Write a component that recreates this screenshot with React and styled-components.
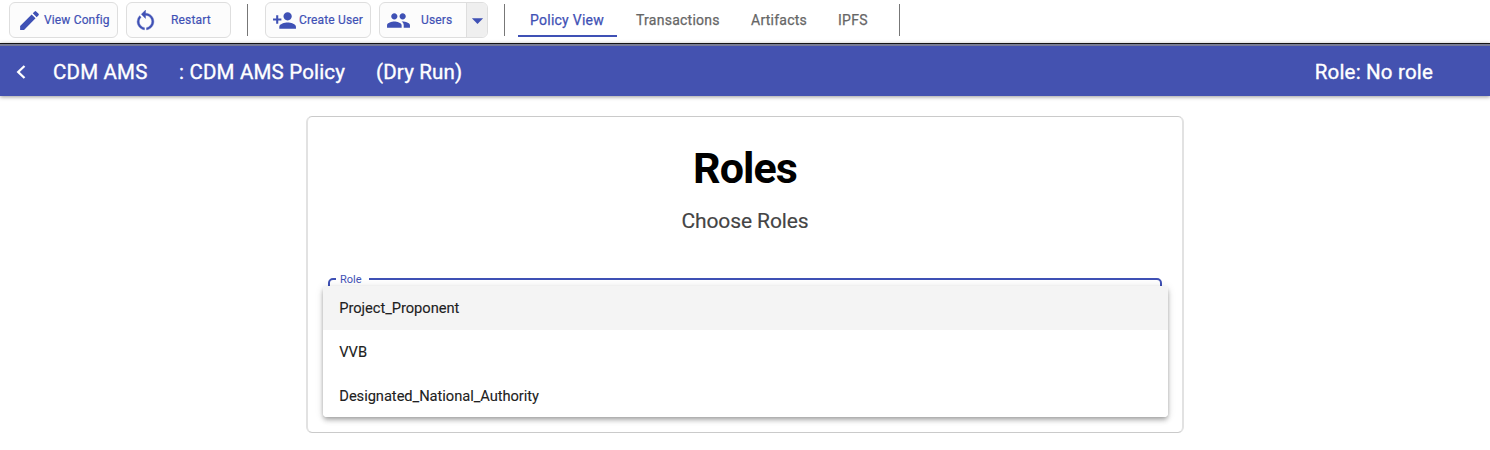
import React from "react";
import styled, { createGlobalStyle } from "styled-components";
import { MdEdit, MdRestartAlt, MdPersonAdd, MdGroup, MdArrowDropDown } from "react-icons/md";

const GlobalStyle = createGlobalStyle`
  *, *::before, *::after { box-sizing: border-box; }
  body { margin: 0; background: #fff; font-family: Roboto, "Liberation Sans", sans-serif; overflow: hidden; }
`;

const Page = styled.div`
  height: 450px;
  display: flex;
  flex-direction: column;
`;

const Toolbar = styled.div`
  height: 43px;
  flex: none;
  display: flex;
  align-items: flex-start;
  padding: 2px 0 0 9px;
`;

const ToolButton = styled.button`
  display: flex;
  align-items: center;
  height: 36px;
  width: ${(p) => p.$width}px;
  margin-right: ${(p) => p.$after}px;
  padding: 0 0 0 ${(p) => p.$pad}px;
  border: 1px solid #dedede;
  border-radius: 6px;
  background: #fcfcfc;
  color: #3f51b5;
  font: 400 12px Roboto, sans-serif;
  white-space: nowrap;
  overflow: hidden;
  svg { flex: none; }
`;

const ButtonLabel = styled.span`
  margin-left: ${(p) => p.$gap}px;
  letter-spacing: 0.15px;
  -webkit-text-stroke: 0.2px currentColor;
`;

const RestartIcon = styled(MdRestartAlt)`
  path:not([fill="none"]) {
    stroke: currentColor;
    stroke-width: 0.4px;
  }
`;

const DropPart = styled.span`
  display: flex;
  align-items: center;
  justify-content: center;
  align-self: stretch;
  width: 21px;
  margin-left: auto;
  border-left: 1px solid #dedede;
  background: #efefef;
`;

const Divider = styled.div`
  width: 1px;
  height: 32px;
  margin: 2px ${(p) => p.$after}px 0 0;
  background: #777;
`;

const Tabs = styled.nav`
  display: flex;
  margin-right: 18px;
`;

const Tab = styled.a`
  height: 35px;
  padding-left: ${(p) => (p.$active ? 12 : 19)}px;
  line-height: 37px;
  font-size: 14px;
  letter-spacing: 0.25px;
  -webkit-text-stroke: 0.25px currentColor;
  width: ${(p) => p.$width}px;
  white-space: nowrap;
  color: ${(p) => (p.$active ? "#3f51b5" : "#666")};
  border-bottom: 2px solid ${(p) => (p.$active ? "#3f51b5" : "transparent")};
`;

const Header = styled.header`
  height: 53px;
  flex: none;
  display: flex;
  align-items: center;
  padding: 4px 57px 0 15px;
  border-top: 1px solid #151515;
  background: linear-gradient(#777b96 0 2px, #4452b0 2px);
  color: #fff;
  font-size: 20.5px;
  letter-spacing: 0.18px;
  -webkit-text-stroke: 0.35px currentColor;
  box-shadow: 0 1px 4px rgba(0, 0, 0, 0.4);
  white-space: nowrap;
`;

const BackIcon = styled.svg`
  width: 11px;
  height: 16px;
  margin-right: 27px;
`;

const HeaderText = styled.span`
  width: ${(p) => p.$width}px;
  flex: none;
`;

const HeaderRole = styled.span`
  margin-left: auto;
`;

const Card = styled.main`
  width: 878px;
  height: 317px;
  margin: 20px 0 0 306px;
  padding: 26px 15px 0;
  border: solid;
  border-width: 1px 2px;
  border-color: #cacaca #e2e2e2;
  border-radius: 6px;
`;

const Title = styled.h1`
  margin: 0;
  height: 51px;
  line-height: 51px;
  text-align: center;
  font-size: 43px;
  font-weight: 700;
  letter-spacing: -0.9px;
  color: #000;
`;

const Subtitle = styled.p`
  margin: 12px 0 0;
  line-height: 31px;
  height: 30px;
  text-align: center;
  font-size: 21px;
  letter-spacing: -0.1px;
  color: #444;
  -webkit-text-stroke: 0.15px currentColor;
`;

const SelectWrap = styled.div`
  position: relative;
  width: 845px;
  margin-top: 36px;
`;

const Field = styled.fieldset`
  height: 50px;
  margin: 0 6px 0 5px;
  padding: 0 0 0 1px;
  border: 2px solid #3f51b5;
  border-radius: 5px;
`;

const FieldLabel = styled.legend`
  height: 14px;
  margin-left: 5px;
  padding: 0 7px 0 4px;
  line-height: 15px;
  font-size: 11px;
  color: #3f51b5;
`;

const Options = styled.ul`
  position: absolute;
  top: 14px;
  left: 0;
  right: 0;
  margin: 0;
  padding: 0;
  list-style: none;
  overflow: hidden;
  border-radius: 4px;
  background: #fff;
  box-shadow: 0 2px 4px -1px rgba(0, 0, 0, 0.25), 0 4px 5px rgba(0, 0, 0, 0.14), 0 1px 9px rgba(0, 0, 0, 0.12);
`;

const Option = styled.li`
  height: 43.8px;
  line-height: 44px;
  padding-left: 16.3px;
  font-size: 14.7px;
  letter-spacing: -0.05px;
  color: #212121;
  -webkit-text-stroke: 0.1px currentColor;
  background: ${(p) => (p.$active ? "#f4f4f4" : "#fff")};
`;

export default function App() {
  return (
    <Page>
      <GlobalStyle />
      <Toolbar>
        <ToolButton $width={109} $after={8} $pad={7}>
          <MdEdit size={25} />
          <ButtonLabel $gap={2}>View Config</ButtonLabel>
        </ToolButton>
        <ToolButton $width={105} $after={16} $pad={6}>
          <RestartIcon size={25} />
          <ButtonLabel $gap={13}>Restart</ButtonLabel>
        </ToolButton>
        <Divider $after={17} />
        <ToolButton $width={106} $after={8} $pad={6}>
          <MdPersonAdd size={25} />
          <ButtonLabel $gap={2}>Create User</ButtonLabel>
        </ToolButton>
        <ToolButton $width={109} $after={16} $pad={6}>
          <MdGroup size={25} />
          <ButtonLabel $gap={10}>Users</ButtonLabel>
          <DropPart><MdArrowDropDown size={27} /></DropPart>
        </ToolButton>
        <Divider $after={13} />
        <Tabs>
          <Tab $active $width={99}>Policy View</Tab>
          <Tab $width={115}>Transactions</Tab>
          <Tab $width={87}>Artifacts</Tab>
          <Tab $width={62}>IPFS</Tab>
        </Tabs>
        <Divider $after={0} />
      </Toolbar>
      <Header>
        <BackIcon viewBox="0 0 11 16">
          <path d="M9.5 2 3.2 8l6.3 6" fill="none" stroke="#fff" strokeWidth="2.3" />
        </BackIcon>
        <HeaderText $width={126}>CDM AMS</HeaderText>
        <HeaderText $width={197}>: CDM AMS Policy</HeaderText>
        <HeaderText $width={100}>(Dry Run)</HeaderText>
        <HeaderRole>Role: No role</HeaderRole>
      </Header>
      <Card>
        <Title>Roles</Title>
        <Subtitle>Choose Roles</Subtitle>
        <SelectWrap>
          <Field>
            <FieldLabel>Role</FieldLabel>
          </Field>
          <Options>
            <Option $active>Project_Proponent</Option>
            <Option>VVB</Option>
            <Option>Designated_National_Authority</Option>
          </Options>
        </SelectWrap>
      </Card>
    </Page>
  );
}
